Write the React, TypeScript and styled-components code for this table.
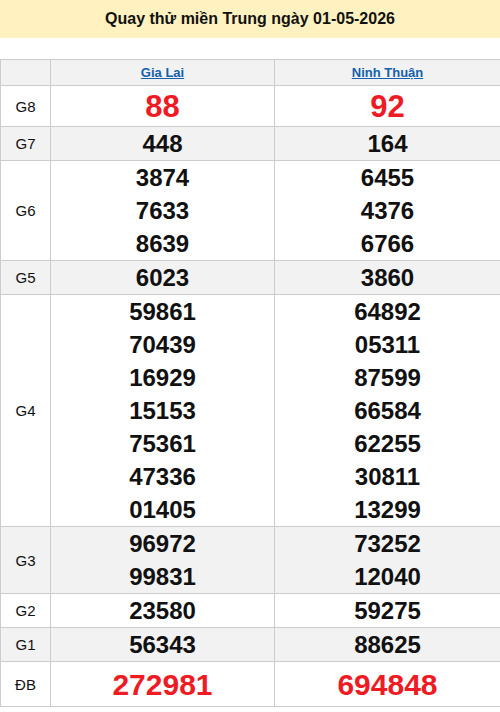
import React from 'react';
import styled, { createGlobalStyle } from 'styled-components';

const GlobalStyle = createGlobalStyle`
  body {
    margin: 0;
    font-family: 'Liberation Sans', Arial, sans-serif;
    background: #fff;
  }
`;

const Title = styled.h2`
  margin: 0 0 21px;
  height: 38px;
  line-height: 38px;
  background: #fff2c0;
  text-align: center;
  font-size: 16px;
  font-weight: bold;
  color: #111;
`;

const Table = styled.table`
  width: 500px;
  border-collapse: collapse;
  table-layout: fixed;
  font-family: 'Liberation Sans', Arial, sans-serif;
`;

const Row = styled.tr<{ shaded?: boolean }>`
  background: ${({ shaded }) => (shaded ? '#f2f2f2' : '#fff')};
`;

const HeadCell = styled.th`
  border: 1px solid #cccccc;
  height: 25px;
  padding: 0;
  font-size: 13px;
  font-weight: bold;

  a {
    color: #1460aa;
    text-decoration: underline;
  }
`;

const Label = styled.td`
  border: 1px solid #cccccc;
  padding: 0;
  text-align: center;
  font-size: 15px;
  color: #111;
`;

const NumCell = styled.td<{ size: number; red?: boolean; tall: number }>`
  border: 1px solid #cccccc;
  padding: 0;
  text-align: center;
  vertical-align: middle;
  height: ${({ tall }) => tall}px;
  font-weight: bold;
  font-size: ${({ size }) => size}px;
  line-height: 33px;
  color: ${({ red }) => (red ? '#ed1c24' : '#111')};
`;

const Num = styled.div`
  line-height: 33px;
`;

type Prize = { name: string; a: string[]; b: string[]; size?: number; tall?: number };

const prizes: Prize[] = [
  { name: 'G8', a: ['88'], b: ['92'], size: 31, tall: 40 },
  { name: 'G7', a: ['448'], b: ['164'] },
  { name: 'G6', a: ['3874', '7633', '8639'], b: ['6455', '4376', '6766'] },
  { name: 'G5', a: ['6023'], b: ['3860'] },
  {
    name: 'G4',
    a: ['59861', '70439', '16929', '15153', '75361', '47336', '01405'],
    b: ['64892', '05311', '87599', '66584', '62255', '30811', '13299'],
  },
  { name: 'G3', a: ['96972', '99831'], b: ['73252', '12040'] },
  { name: 'G2', a: ['23580'], b: ['59275'] },
  { name: 'G1', a: ['56343'], b: ['88625'] },
  { name: 'ĐB', a: ['272981'], b: ['694848'], size: 30, tall: 44 },
];

const App = () => {
  return (
    <>
      <GlobalStyle />
      <Title>Quay thử miền Trung ngày 01-05-2026</Title>
      <Table>
        <colgroup>
          <col style={{ width: 50 }} />
          <col style={{ width: 224 }} />
          <col style={{ width: 226 }} />
        </colgroup>
        <thead>
          <Row shaded>
            <HeadCell />
            <HeadCell>
              <a href="#">Gia Lai</a>
            </HeadCell>
            <HeadCell>
              <a href="#">Ninh Thuận</a>
            </HeadCell>
          </Row>
        </thead>
        <tbody>
          {prizes.map((p, i) => {
            const tall = p.tall || p.a.length * 33;
            return (
              <Row key={p.name} shaded={i % 2 === 1}>
                <Label>{p.name}</Label>
                <NumCell size={p.size || 24} red={!!p.size} tall={tall}>
                  {p.a.map(n => (
                    <Num key={n}>{n}</Num>
                  ))}
                </NumCell>
                <NumCell size={p.size || 24} red={!!p.size} tall={tall}>
                  {p.b.map(n => (
                    <Num key={n}>{n}</Num>
                  ))}
                </NumCell>
              </Row>
            );
          })}
        </tbody>
      </Table>
    </>
  );
};

export default App;
